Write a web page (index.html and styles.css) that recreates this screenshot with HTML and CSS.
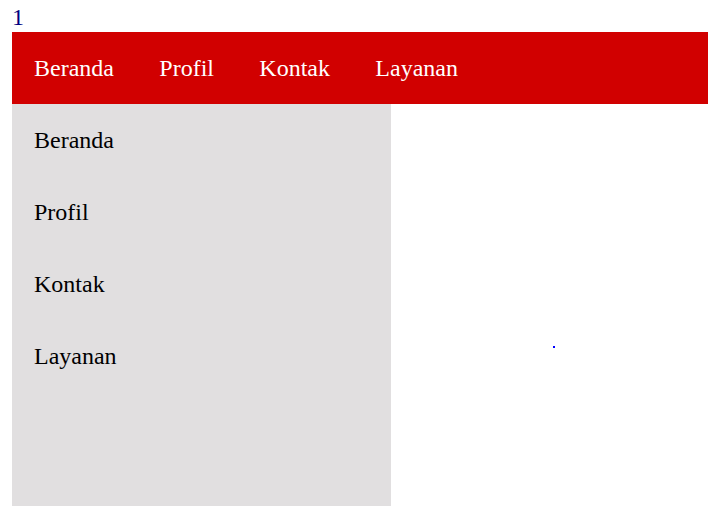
FILE: index.html
```html
<!DOCTYPE html>
<html lang="id">
<head>
<meta charset="utf-8">
<title>Menu</title>
<link rel="stylesheet" href="styles.css">
</head>
<body>
<div class="num">1</div>
<nav class="topnav">
  <a href="#">Beranda</a>
  <a href="#">Profil</a>
  <a href="#">Kontak</a>
  <a href="#">Layanan</a>
</nav>
<div class="layout">
  <aside class="sidebar">
    <a href="#">Beranda</a>
    <a href="#">Profil</a>
    <a href="#">Kontak</a>
    <a href="#">Layanan</a>
  </aside>
  <main class="content">
    <span class="dot"></span>
  </main>
</div>
</body>
</html>
```
FILE: styles.css
```css
html, body {
  margin: 0;
  padding: 0;
}
body {
  padding: 4px 0 0 12px;
  font-family: "Liberation Serif", "Times New Roman", serif;
  font-size: 24px;
  background: #fff;
  overflow: hidden;
  height: 506px;
  box-sizing: border-box;
}
.num {
  color: #000080;
  line-height: 27.6px;
  height: 28px;
}
.topnav {
  display: flex;
  gap: 1.35px;
  background: #d10000;
  height: 72px;
}
.topnav a {
  color: #fff;
  text-decoration: none;
  padding: 22px;
  line-height: 28px;
}
.layout {
  display: flex;
}
.sidebar {
  width: 379px;
  height: 410px;
  background: #e1dfe0;
  display: flex;
  flex-direction: column;
}
.sidebar a {
  color: #000;
  text-decoration: none;
  padding: 22px;
  line-height: 28px;
}
.content {
  flex: 1;
  padding: 242px 0 0 162px;
}
.dot {
  display: block;
  width: 2px;
  height: 2px;
  background: #0000ff;
}
```
